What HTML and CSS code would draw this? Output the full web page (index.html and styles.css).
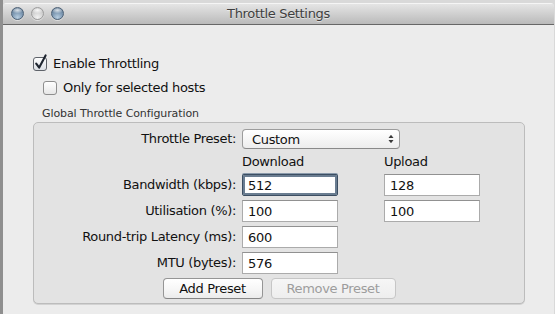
FILE: index.html
```html
<!DOCTYPE html>
<html>
<head>
<meta charset="utf-8">
<title>Throttle Settings</title>
<link rel="stylesheet" href="styles.css">
</head>
<body>
<div class="desktop">
  <div class="window">
    <div class="titlebar">
      <div class="lights">
        <span class="light blue"></span>
        <span class="light grey"></span>
        <span class="light blue"></span>
      </div>
      <div class="title">Throttle Settings</div>
      <div></div>
    </div>
    <div class="content">
      <label class="check-row">
        <svg class="cb" width="14" height="14" viewBox="0 0 14 14">
          <defs>
            <linearGradient id="cbg" x1="0" y1="0" x2="0" y2="1">
              <stop offset="0" stop-color="#ffffff"/>
              <stop offset="1" stop-color="#d9dde3"/>
            </linearGradient>
          </defs>
          <rect x="0.5" y="0.5" width="13" height="13" rx="2.5" fill="url(#cbg)" stroke="#5f636a"/>
          <path d="M3.2 6.6 L6.2 10.6 L12.6 -1.6" fill="none" stroke="#1e2530" stroke-width="2.1" stroke-linecap="round" stroke-linejoin="round"/>
        </svg>
        <span>Enable Throttling</span>
      </label>
      <label class="check-row sub">
        <svg class="cb" width="14" height="14" viewBox="0 0 14 14">
          <defs>
            <linearGradient id="cbg2" x1="0" y1="0" x2="0" y2="1">
              <stop offset="0" stop-color="#ffffff"/>
              <stop offset="1" stop-color="#e6e6e6"/>
            </linearGradient>
          </defs>
          <rect x="0.5" y="0.5" width="13" height="13" rx="2.5" fill="url(#cbg2)" stroke="#8e8e8e"/>
        </svg>
        <span>Only for selected hosts</span>
      </label>
      <div class="group-title">Global Throttle Configuration</div>
      <div class="group">
        <div class="grid">
          <div class="lbl">Throttle Preset:</div>
          <div class="select">
            <span>Custom</span>
            <svg width="6" height="10" viewBox="0 0 6 10">
              <path d="M0.5 4 L3 0.8 L5.5 4 Z" fill="#3a3a3a"/>
              <path d="M0.5 6 L3 9.2 L5.5 6 Z" fill="#3a3a3a"/>
            </svg>
          </div>

          <div></div>
          <div class="head">Download</div>
          <div class="head">Upload</div>

          <div class="lbl">Bandwidth (kbps):</div>
          <input class="field focus" type="text" value="512">
          <input class="field" type="text" value="128">

          <div class="lbl">Utilisation (%):</div>
          <input class="field" type="text" value="100">
          <input class="field" type="text" value="100">

          <div class="lbl">Round-trip Latency (ms):</div>
          <input class="field" type="text" value="600">
          <div></div>

          <div class="lbl">MTU (bytes):</div>
          <input class="field" type="text" value="576">
          <div></div>
        </div>
        <div class="buttons">
          <button class="btn add" type="button">Add Preset</button>
          <button class="btn remove" type="button" disabled>Remove Preset</button>
        </div>
      </div>
    </div>
  </div>
</div>
</body>
</html>
```

FILE: styles.css
```css
html, body {
  margin: 0;
  padding: 0;
}

body {
  background: #d9d9d9;
  font-family: "DejaVu Sans", "Liberation Sans", sans-serif;
  color: #111;
  overflow: hidden;
}

.desktop {
  height: 314px;
  box-sizing: border-box;
  padding-top: 3px;
  border-left: 3px solid #8f8f8f;
}

.window {
  margin-right: 1px;
  height: 311px;
  background: #ececec;
  border-radius: 4px 4px 0 0;
  overflow: hidden;
}

.titlebar {
  height: 21px;
  border-bottom: 1px solid #676767;
  background: linear-gradient(#e7e7e7, #bababa);
  box-shadow: inset 0 1px 0 #f5f5f5;
  display: grid;
  grid-template-columns: 1fr auto 1fr;
  align-items: center;
}

.lights {
  display: flex;
  gap: 7px;
  padding-left: 8px;
}

.light {
  width: 13px;
  height: 13px;
  box-sizing: border-box;
  border-radius: 50%;
}

.light.blue {
  border: 1px solid #4d6176;
  background:
    radial-gradient(ellipse 55% 30% at 50% 20%, rgba(255,255,255,0.75), rgba(255,255,255,0) 100%),
    radial-gradient(circle at 50% 85%, #b7cde0 0%, #7d98b2 50%, #556f89 100%);
  box-shadow: 0 1px 0 rgba(255,255,255,0.5);
}

.light.grey {
  border: 1px solid #9c9c9c;
  background:
    radial-gradient(ellipse 55% 30% at 50% 20%, rgba(255,255,255,0.9), rgba(255,255,255,0) 100%),
    radial-gradient(circle at 50% 85%, #f2f2f2 0%, #d0d0d0 55%, #b5b5b5 100%);
  box-shadow: 0 1px 0 rgba(255,255,255,0.5);
}

.title {
  font-size: 13px;
  line-height: 16px;
  letter-spacing: -0.33px;
  color: #3f3f3f;
  text-shadow: 0 1px 0 rgba(255, 255, 255, 0.5);
}

.content {
  padding: 31px 0 0 30px;
  width: 492px;
}

.check-row {
  display: flex;
  align-items: center;
  gap: 6px;
  height: 16px;
  font-size: 13px;
  line-height: 16px;
  letter-spacing: -0.33px;
  color: #111;
}

.cb {
  display: block;
  overflow: visible;
  flex: none;
}

.check-row.sub {
  margin-top: 8px;
  margin-left: 10px;
}

.group-title {
  margin: 11px 0 2px 9px;
  font-size: 11px;
  line-height: 13px;
  letter-spacing: -0.1px;
  color: #333;
}

.group {
  box-sizing: border-box;
  width: 492px;
  height: 182px;
  border: 1px solid #bcbcbc;
  border-radius: 5px;
  background: #e3e3e3;
  box-shadow: 0 1px 0 #d2d2d2;
  padding: 6px 0 4px 0;
}

.grid {
  display: grid;
  grid-template-columns: 202px 136px 96px;
  grid-template-rows: 20px 17px repeat(4, 22px);
  column-gap: 6px;
  row-gap: 4px;
  align-items: center;
}

.lbl {
  text-align: right;
  font-size: 13px;
  line-height: 16px;
  letter-spacing: -0.33px;
  color: #111;
  white-space: nowrap;
}

.head {
  font-size: 13px;
  line-height: 17px;
  letter-spacing: -0.33px;
  color: #111;
}

.select {
  grid-column: 2 / 4;
  width: 158px;
  height: 20px;
  box-sizing: border-box;
  border: 1px solid #9c9c9c;
  border-bottom-color: #8a8a8a;
  border-radius: 4px;
  background: linear-gradient(#ffffff, #f6f6f6 50%, #ededed);
  display: flex;
  align-items: center;
  justify-content: space-between;
  padding: 0 5px 0 9px;
  font-size: 13px;
  letter-spacing: -0.33px;
  color: #111;
}

.select svg {
  display: block;
}

.field {
  width: 96px;
  height: 22px;
  box-sizing: border-box;
  margin: 0;
  border: 1px solid #ababab;
  border-top-color: #919191;
  border-radius: 0;
  background: #fff;
  padding: 1px 0 0 5px;
  font-family: "DejaVu Sans", "Liberation Sans", sans-serif;
  font-size: 13px;
  letter-spacing: -0.33px;
  color: #111;
  outline: none;
  appearance: none;
}

.field.focus {
  border: 1px solid #3c4e62;
  box-shadow: inset 0 0 0 2px #6a7d91, 0 -1px 0 #8a9aab;
  border-radius: 2px;
}

.buttons {
  display: flex;
  justify-content: center;
  gap: 8px;
  margin-top: 4px;
}

.btn {
  height: 21px;
  box-sizing: border-box;
  margin: 0;
  padding: 0;
  border: 1px solid #959595;
  border-bottom-color: #858585;
  border-radius: 4px;
  background: linear-gradient(#ffffff, #f7f7f7 50%, #ebebeb);
  font-family: "DejaVu Sans", "Liberation Sans", sans-serif;
  font-size: 13px;
  letter-spacing: -0.33px;
  color: #111;
}

.btn.add {
  width: 100px;
}

.btn.remove {
  width: 125px;
  border-color: #c6c6c6;
  background: linear-gradient(#f6f6f6, #eeeeee);
  color: #9d9d9d;
}
```
